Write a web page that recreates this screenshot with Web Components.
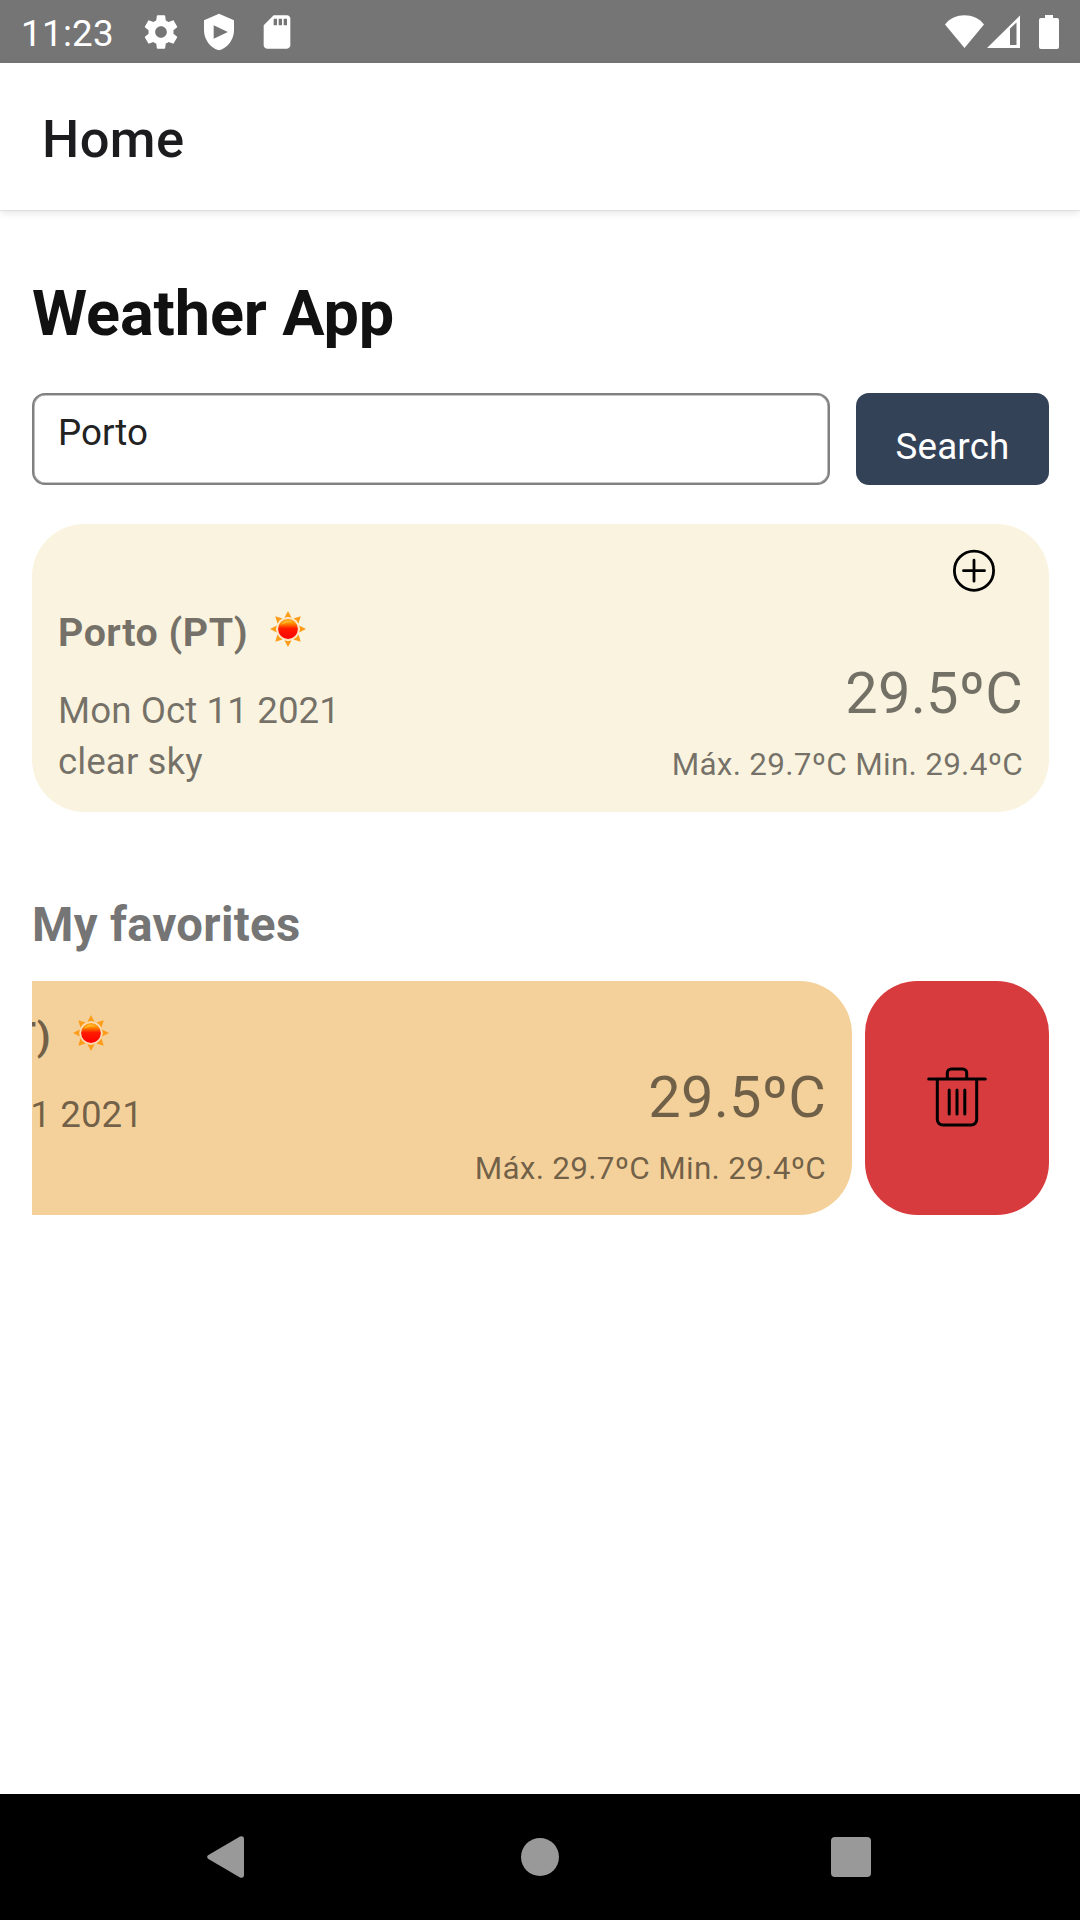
<!DOCTYPE html>
<html lang="en">
<head>
<meta charset="utf-8">
<title>Weather App</title>
<style>
  html, body { margin: 0; padding: 0; }
  body { width: 1080px; height: 1920px; overflow: hidden; background: #fff; font-family: Roboto, "Liberation Sans", sans-serif; }
</style>
</head>
<body>
<weather-screen></weather-screen>

<script>
const define = (name, html) => {
  const tpl = document.createElement('template');
  tpl.innerHTML = html;
  customElements.define(name, class extends HTMLElement {
    constructor() {
      super();
      this.attachShadow({ mode: 'open' }).append(tpl.content.cloneNode(true));
    }
  });
};

define('status-bar', `
<style>
  :host { display: flex; align-items: center; justify-content: space-between; height: 63px; background: #757575; color: #fff; box-sizing: border-box; padding: 0 21px; }
  .left, .right { display: flex; align-items: center; height: 63px; }
  .time { font-size: 36.75px; line-height: 43px; margin-top: 3px; width: 120px; white-space: nowrap; letter-spacing: .3px; }
  svg { display: block; fill: #fff; }
</style>
<div class="left">
  <span class="time">11:23</span>
  <svg width="40" height="40" viewBox="0 0 24 24"><path d="M19.43 12.98c.04-.32.07-.64.07-.98s-.03-.66-.07-.98l2.11-1.65c.19-.15.24-.42.12-.64l-2-3.46c-.12-.22-.39-.3-.61-.22l-2.49 1c-.52-.4-1.08-.73-1.69-.98l-.38-2.65A.488.488 0 0 0 14 2h-4c-.25 0-.46.18-.49.42l-.38 2.65c-.61.25-1.17.59-1.69.98l-2.49-1c-.23-.09-.49 0-.61.22l-2 3.46c-.13.22-.07.49.12.64l2.11 1.65c-.04.32-.07.65-.07.98s.03.66.07.98l-2.11 1.65c-.19.15-.24.42-.12.64l2 3.46c.12.22.39.3.61.22l2.49-1c.52.4 1.08.73 1.69.98l.38 2.65c.03.24.24.42.49.42h4c.25 0 .46-.18.49-.42l.38-2.65c.61-.25 1.17-.59 1.69-.98l2.49 1c.23.09.49 0 .61-.22l2-3.46c.12-.22.07-.49-.12-.64l-2.11-1.65zM12 15.5c-1.93 0-3.500-1.570-3.500-3.500s1.570-3.500 3.500-3.500 3.500 1.570 3.500 3.500-1.570 3.500-3.500 3.500z"/></svg>
  <svg style="margin-left:18px" width="40" height="40" viewBox="0 0 24 24"><path fill-rule="evenodd" d="M12 1 3 5v6c0 5.550 3.840 10.740 9 12 5.160-1.260 9-6.450 9-12V5zM8.800 7.900 17.300 12l-8.500 4.100z"/></svg>
  <svg style="margin-left:18px" width="40" height="40" viewBox="0 0 24 24"><path d="M18 2h-8L4.020 8 4 20c0 1.100.9 2 2 2h12c1.100 0 2-.9 2-2V4c0-1.100-.9-2-2-2zm-6 6h-2V4h2v4zm3 0h-2V4h2v4zm3 0h-2V4h2v4z"/></svg>
</div>
<div class="right">
  <svg width="39" height="34" viewBox="0 0 39 34"><path d="M0 9.500C5 3 12 .2 19.500 .2S34 3 39 9.500L19.500 33z"/></svg>
  <svg style="margin-left:3px" width="33" height="34" viewBox="0 0 33 34"><path fill-rule="evenodd" d="M0 33 33 .5V33zM23 13.500V30h6.500V7.500z"/></svg>
  <svg style="margin-left:19px" width="20" height="34" viewBox="0 0 20 34"><path d="M6 0h8v3h4a2 2 0 0 1 2 2v27a2 2 0 0 1-2 2H2a2 2 0 0 1-2-2V5a2 2 0 0 1 2-2h4z"/></svg>
</div>`);

define('app-header', `
<style>
  :host { display: flex; align-items: center; height: 147px; box-sizing: border-box; padding: 5px 42px 0; background: #fff; color: #1c1c1e; letter-spacing: .4px;
    font-size: 52.5px; font-weight: 500; line-height: 62px; box-shadow: 0 1px 1px rgba(0,0,0,.06), 0 3px 8px rgba(0,0,0,.10); }
</style>
<slot></slot>`);

define('search-row', `
<style>
  :host { display: flex; gap: 26px; height: 92px; margin-top: 42px; font-size: 36.75px; line-height: 43px; }
  .field { flex: 1; box-sizing: border-box; border: 2px solid #808080; box-shadow: inset 0 0 0 .6px #909090; border-radius: 13px; padding: 16px 24px; color: #222; }
  .button { width: 193px; box-sizing: border-box; border-radius: 13px; background: #344258; color: #fff; text-align: center; padding-top: 32px; letter-spacing: .2px; }
</style>
<div class="field"><slot></slot></div>
<div class="button"><slot name="action"></slot></div>`);

define('sun-icon', `
<style>:host { display: block; width: 36px; height: 36px; } svg { display: block; }</style>
<svg width="36" height="36" viewBox="-18 -18 36 36">
  <defs><linearGradient id="d" x1="0" y1="0" x2="0" y2="1"><stop offset="0" stop-color="#ffa41c"/><stop offset=".22" stop-color="#ff8a00"/><stop offset=".48" stop-color="#ff1a00"/><stop offset="1" stop-color="#f00"/></linearGradient>
  <g id="r"><path d="M0-18 3.600-11.200Q0-12.800-3.600-11.200z"/></g></defs>
  <g fill="#ff9c1a"><use href="#r"/><use href="#r" transform="rotate(45)"/><use href="#r" transform="rotate(90)"/><use href="#r" transform="rotate(135)"/><use href="#r" transform="rotate(180)"/><use href="#r" transform="rotate(225)"/><use href="#r" transform="rotate(270)"/><use href="#r" transform="rotate(315)"/></g>
  <circle r="11" fill="#ffdfb8"/><circle r="9.900" fill="url(#d)"/>
  <path d="M-7-4Q-5-8.300 0-8.400 3-8.300 5-6.500-2-7.500-7-4z" fill="#ffd040" opacity=".6"/>
</svg>`);

define('weather-card', `
<style>
  :host { display: block; box-sizing: border-box; width: 1017px; padding: 21px 26px 0; border-radius: 52.5px; background: var(--card, #faf3df); color: rgba(0,0,0,.54); }
  .tools { display: flex; justify-content: flex-end; padding-right: 23px; }
  .body { display: flex; justify-content: space-between; height: 213px; }
  .title { display: flex; padding-top: 12px; height: 46px; font-size: 39.4px; line-height: 46px; font-weight: 700; white-space: nowrap; letter-spacing: .5px; }
  .title sun-icon { margin: 1px 0 0 22px; }
  .lines { margin-top: 29px; font-size: 36.75px; line-height: 51px; white-space: nowrap; letter-spacing: .06px; }
  .lines ::slotted(div) { height: 51px; }
  .temps { text-align: right; padding-top: 61px; white-space: nowrap; }
  .now { font-size: 57.75px; line-height: 68px; letter-spacing: .2px; }
  .range { margin-top: 19px; font-size: 31.5px; line-height: 37px; letter-spacing: .26px; }
</style>
<div class="tools"><slot name="tool"></slot></div>
<div class="body">
  <div>
    <div class="title"><slot name="place"></slot><sun-icon></sun-icon></div>
    <div class="lines"><slot></slot></div>
  </div>
  <div class="temps">
    <div class="now"><slot name="now"></slot></div>
    <div class="range"><slot name="range"></slot></div>
  </div>
</div>`);

define('add-icon', `
<style>:host { display: block; height: 53px; } svg { display: block; }</style>
<svg width="52" height="53" viewBox="-26 -25.700 52 53" fill="none" stroke="#000" stroke-width="2.800" stroke-linecap="round"><circle r="19.600"/><path d="M-10.500 0h21M0-10.500v21"/></svg>`);

define('delete-button', `
<style>:host { display: flex; align-items: center; justify-content: center; width: 184px; flex: none; box-sizing: border-box; padding-bottom: 2px; border-radius: 52.5px; background: #d83b3e; } svg { display: block; }</style>
<svg width="60" height="60" viewBox="0 0 60 60" fill="none" stroke="#000" stroke-width="3" stroke-linecap="round">
  <path d="M1.700 12h56.600M20.300 12V6a4 4 0 0 1 4-4h11.400a4 4 0 0 1 4 4v6M10.300 12v40.500a5.500 5.500 0 0 0 5.500 5.500h28.400a5.500 5.500 0 0 0 5.500-5.500V12M22.200 23v24M30 23v24M37.800 23v24"/>
</svg>`);

define('swipe-row', `
<style>
  :host { display: flex; gap: 13px; height: 234px; margin-top: 28px; overflow: hidden; }
  ::slotted(weather-card) { flex: none; margin-left: -197px; }
</style>
<slot></slot><delete-button></delete-button>`);

define('nav-bar', `
<style>
  :host { display: flex; align-items: center; height: 126px; background: #000; box-sizing: border-box; padding-left: 207px; }
  svg { display: block; fill: #999; }
</style>
<svg width="37" height="42" viewBox="0 0 37 42"><path d="M1 19.300 33 .5Q37-.8 37 3.500V38.500Q37 42.800 33 41.500L1 22.700Q-.7 21 1 19.300z"/></svg>
<svg style="margin-left:277px" width="38" height="38" viewBox="0 0 38 38"><circle cx="19" cy="19" r="19"/></svg>
<svg style="margin-left:272px" width="40" height="40" viewBox="0 0 40 40"><rect width="40" height="40" rx="4"/></svg>`);

define('weather-screen', `
<style>
  :host { display: flex; flex-direction: column; height: 1920px; }
  main { flex: 1; padding: 67px 31px 0 32px; }
  h1 { margin: 0; font-size: 63px; line-height: 74px; font-weight: 700; color: #111; letter-spacing: -.12px; }
  h2 { margin: 85px 0 0; font-size: 47.25px; line-height: 56px; font-weight: 700; color: #757575; letter-spacing: .33px; }
  .result { margin-top: 39px; height: 288px; }
</style>
<status-bar></status-bar>
<app-header>Home</app-header>
<main>
  <h1>Weather App</h1>
  <search-row>Porto<span slot="action">Search</span></search-row>
  <weather-card class="result">
    <add-icon slot="tool"></add-icon>
    <span slot="place">Porto (PT)</span>
    <div>Mon Oct 11 2021</div><div>clear sky</div>
    <span slot="now">29.5ºC</span>
    <span slot="range">Máx. 29.7ºC Min. 29.4ºC</span>
  </weather-card>
  <h2>My favorites</h2>
  <swipe-row>
    <weather-card style="--card:#f4d19b">
      <span slot="place">Porto (PT)</span>
      <div>Mon Oct 11 2021</div>
      <span slot="now">29.5ºC</span>
      <span slot="range">Máx. 29.7ºC Min. 29.4ºC</span>
    </weather-card>
  </swipe-row>
</main>
<nav-bar></nav-bar>`);
</script>
</body>
</html>
